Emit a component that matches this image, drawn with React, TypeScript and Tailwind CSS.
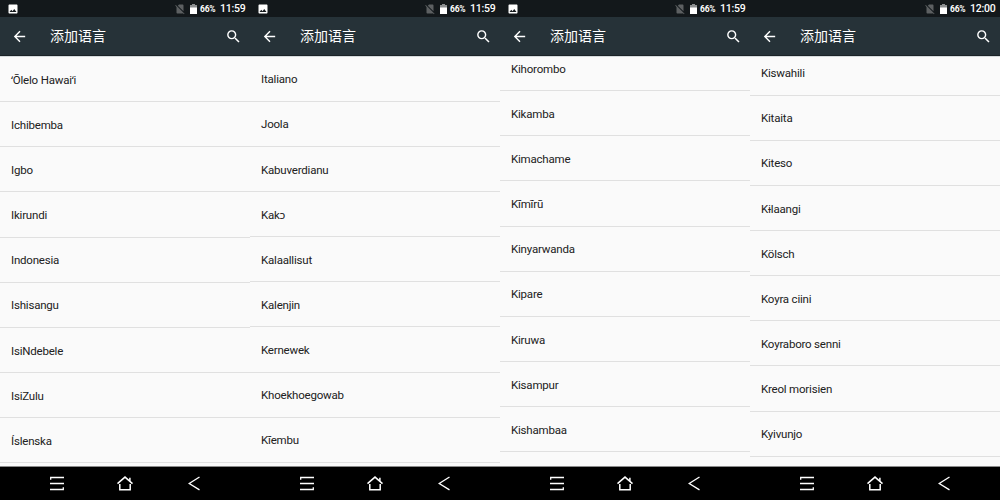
import { MdArrowBack, MdImage, MdNoSim, MdSearch } from 'react-icons/md';

interface Screen {
  id: number;
  time: string;
  // vertical scroll position of the list
  scroll: string;
  languages: string[];
}

const screens: Screen[] = [
  {
    id: 1,
    time: '11:59',
    scroll: 'mt-0',
    languages: ['ʻŌlelo Hawaiʻi', 'Ichibemba', 'Igbo', 'Ikirundi', 'Indonesia', 'Ishisangu', 'IsiNdebele', 'IsiZulu', 'Íslenska', ''],
  },
  {
    id: 2,
    time: '11:59',
    scroll: '-mt-[0.4px]',
    languages: ['Italiano', 'Joola', 'Kabuverdianu', 'Kakɔ', 'Kalaallisut', 'Kalenjin', 'Kernewek', 'Khoekhoegowab', 'Kĩembu', ''],
  },
  {
    id: 3,
    time: '11:59',
    scroll: '-mt-[11px]',
    languages: ['Kihorombo', 'Kikamba', 'Kimachame', 'Kĩmĩrũ', 'Kinyarwanda', 'Kipare', 'Kiruwa', 'Kisampur', 'Kishambaa', ''],
  },
  {
    id: 4,
    time: '12:00',
    scroll: '-mt-[6.6px]',
    languages: ['Kiswahili', 'Kitaita', 'Kiteso', 'Kɨlaangi', 'Kölsch', 'Koyra ciini', 'Koyraboro senni', 'Kreol morisien', 'Kyivunjo', ''],
  },
];

const StatusBar = ({ time, showImage }: { time: string; showImage: boolean }) => (
  <div className="flex h-[17px] shrink-0 items-center bg-[#13181b] pr-[5px] pl-[6.5px] text-white">
    {showImage && <MdImage className="size-3" />}
    <MdNoSim className="ml-auto size-3 text-[#5d6062]" />
    <svg className="ml-1 h-[10px] w-[7px]" viewBox="0 0 7 10">
      <path d="M2 0h3v1h2v3H0V1h2z" fill="#8b8e90" />
      <path d="M0 3.5h7V10H0z" fill="#fff" />
    </svg>
    <span className="ml-[3px] w-[20px] pt-[2px] text-[8.5px] leading-none font-bold tracking-[-0.2px]">66%</span>
    <span className="w-[25px] pt-[2px] text-[10.5px] leading-none font-medium tracking-[-0.2px]">{time}</span>
  </div>
);

const AppBar = () => (
  <div className="flex h-[39px] shrink-0 items-center border-b border-[#1b2327] bg-[#263238] pr-2 pl-[11px] text-white">
    <MdArrowBack className="size-[17px]" />
    <h1 className="ml-[22px] pb-[2px] font-['Noto_Sans_CJK_SC',sans-serif] text-[14px] leading-none">添加语言</h1>
    <MdSearch className="ml-auto size-[17px]" />
  </div>
);

const NavBar = () => (
  <div className="flex h-[34px] shrink-0 items-center border-t border-[#8a8a8a] bg-black text-white">
    <svg className="ml-[50px] h-[15px] w-[14px]" viewBox="0 0 14 15" fill="none" stroke="currentColor" strokeWidth="1.3">
      <path d="M.7 3.7V1.5H14M0 7.5h14M0 13.5h13.3v-2.2" />
    </svg>
    <svg className="ml-[53px] h-[15px] w-[16px]" viewBox="0 0 16 15" fill="none" stroke="currentColor" strokeWidth="1.5">
      <path d="M.5 7.6 8 1.1l7.5 6.5M12.9 5V1.8M2.8 8v5.8h10.4V8" />
    </svg>
    <svg className="ml-[55px] h-[15px] w-[12px]" viewBox="0 0 12 15" fill="none" stroke="currentColor" strokeWidth="1.3">
      <path d="M11.5 1 1.2 7.5l10.3 6.4" />
    </svg>
  </div>
);

const LanguageScreen = ({ screen }: { screen: Screen }) => (
  <section className="flex h-[500px] w-[250px] flex-col overflow-hidden">
    <StatusBar time={screen.time} showImage={screen.id !== 4} />
    <AppBar />
    <div className="min-h-0 flex-1 overflow-hidden border-t border-[#d5dadc] bg-[#fafafa]">
      <ul className={screen.scroll}>
        {screen.languages.map((language, i) => (
          <li
            key={i}
            className="flex h-[45.15px] items-center border-b border-[#e0e0e0] pt-[2.5px] pl-[11px] text-[11.5px] tracking-[-0.2px] text-[#212121]"
          >
            {language}
          </li>
        ))}
      </ul>
    </div>
    <NavBar />
  </section>
);

const App = () => {
  return (
    <main className="flex h-[500px] w-[1000px] overflow-hidden font-[Roboto,'Noto_Sans',sans-serif]">
      {screens.map(screen => (
        <LanguageScreen key={screen.id} screen={screen} />
      ))}
    </main>
  );
};

export default App;
